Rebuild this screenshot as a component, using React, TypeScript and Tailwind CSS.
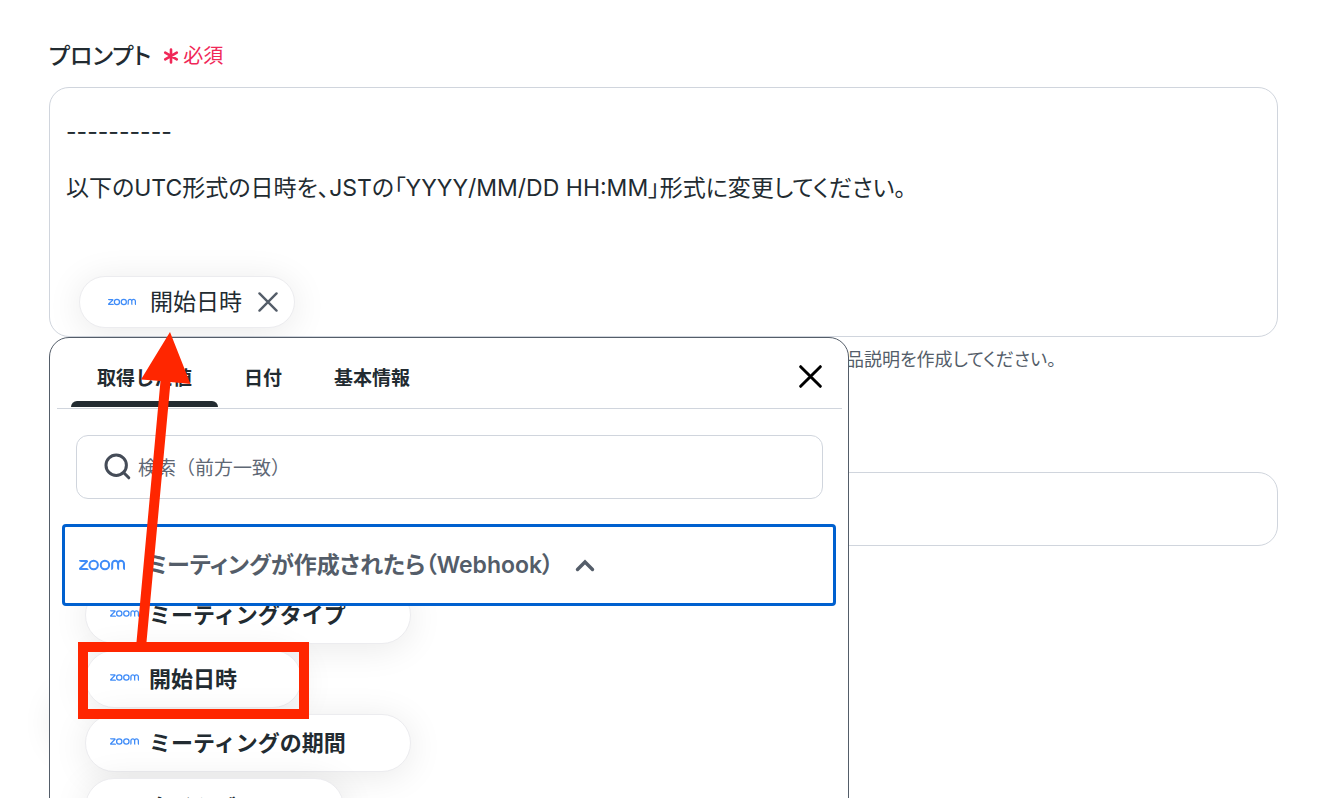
import React from 'react';
import { SiZoom } from 'react-icons/si';

const fields = ['ミーティングタイプ', '開始日時', 'ミーティングの期間', 'タイムゾーン'];

const tabs = [
  { label: '取得した値', active: true },
  { label: '日付', active: false },
  { label: '基本情報', active: false },
];

function Cross({ className }: { className: string }) {
  return (
    <svg viewBox="0 0 22 22" className={className} fill="none" stroke="currentColor" strokeLinecap="round" aria-hidden="true">
      <path d="M1.6 1.6 20.4 20.4M20.4 1.6 1.6 20.4" />
    </svg>
  );
}

function PromptField() {
  return (
    <section>
      <div className="flex h-8 items-center">
        <label htmlFor="prompt" className="text-[23px] font-medium">プロンプト</label>
        <span className="ml-3 flex items-center gap-1 text-[20px] text-[#f02858]">
          <svg viewBox="0 0 16 16" className="size-4" stroke="currentColor" strokeWidth="2.6" strokeLinecap="round" aria-hidden="true">
            <path d="M8 1.6v12.8M2.2 4.6l11.6 6.8M13.8 4.6 2.2 11.4" />
          </svg>
          必須
        </span>
      </div>
      <div className="mt-[15px] h-[250px] rounded-[20px] border border-[#d0d5dd] pt-[30px]">
        <textarea
          id="prompt"
          rows={4}
          className="block w-full resize-none overflow-hidden bg-transparent px-4 text-[23px] leading-7 outline-none"
          defaultValue={'----------\n\n以下のUTC形式の日時を、JSTの「YYYY/MM/DD HH:MM」形式に変更してください。'}
        />
        <div className="ml-[29px] mt-[46px] inline-flex h-[52px] items-center rounded-full border border-[#ececef] bg-white pl-7 pr-4 shadow-[0_4px_36px_rgba(0,0,0,0.09)]">
          <SiZoom className="size-7 text-[#3f8cf8]" aria-label="zoom" />
          <span className="ml-3.5 text-[23px]">開始日時</span>
          <button type="button" aria-label="削除" className="ml-4 text-[#545d69]">
            <Cross className="size-5 stroke-[2.6]" />
          </button>
        </div>
      </div>
    </section>
  );
}

function ValuePicker() {
  return (
    <div className="absolute left-[49px] top-[337px] h-[600px] w-[800px] overflow-hidden rounded-[20px] border border-[#545d69] bg-white">
      <div className="ml-[7px] mr-1.5 flex h-[71px] items-stretch border-b border-[#d0d5dd] pl-3.5 pr-5">
        <div role="tablist" className="flex">
          {tabs.map((tab) => (
            <button
              key={tab.label}
              type="button"
              role="tab"
              aria-selected={tab.active}
              className="relative px-[26px] pt-3 text-[19px] font-semibold [font-feature-settings:normal]"
            >
              {tab.label}
              {tab.active && <span className="absolute inset-x-0 bottom-px h-1.5 rounded-t-md bg-[#222b31]" />}
            </button>
          ))}
        </div>
        <button type="button" aria-label="閉じる" className="ml-auto mt-1.5 text-black">
          <Cross className="size-[23px] stroke-[2.8]" />
        </button>
      </div>

      <label className="ml-[26px] mr-[25px] mt-[26px] flex h-16 items-center rounded-xl border border-[#d0d5dd] pl-[27px] pr-4">
        <svg viewBox="0 0 28 28" className="size-7 shrink-0" fill="none" stroke="#454c58" strokeWidth="3" strokeLinecap="round" aria-hidden="true">
          <circle cx="12.2" cy="12.2" r="10.2" />
          <path d="m19.8 19.8 5 5" />
        </svg>
        <input
          type="text"
          aria-label="検索"
          placeholder="検索（前方一致）"
          className="ml-1.5 min-w-0 flex-1 bg-transparent pt-1 text-[19px] outline-none [font-feature-settings:normal] placeholder:text-[#5f6875]"
        />
      </label>

      <button
        type="button"
        aria-expanded="true"
        className="mx-3 mt-[25px] flex h-[82px] w-[774px] items-center rounded border-[3px] border-[#0060cf] pl-3.5 text-left text-[#545d69]"
      >
        <SiZoom className="size-[46px] text-[#3f8cf8]" aria-label="zoom" />
        <span className="ml-[22px] text-[23px] font-semibold">ミーティングが作成されたら（Webhook）</span>
        <svg viewBox="0 0 20 14" className="ml-[21px] h-3.5 w-5" fill="none" stroke="currentColor" strokeWidth="3.4" strokeLinecap="round" aria-hidden="true">
          <path d="m2.5 11.5 7.5-7.5 7.5 7.5" />
        </svg>
      </button>

      <div className="overflow-hidden pb-16 pl-[35px]">
        <ul className="-mt-5 flex flex-col items-start gap-1.5">
          {fields.map((field) => (
            <li key={field}>
              <button
                type="button"
                className="flex h-[58px] items-center rounded-full border border-[#ececef] bg-white pl-6 pr-16 shadow-[0_4px_36px_rgba(0,0,0,0.09)]"
              >
                <SiZoom className="mb-1 size-[29px] text-[#3f8cf8]" aria-label="zoom" />
                <span className="ml-2.5 text-[22px] font-semibold [font-feature-settings:normal]">{field}</span>
              </button>
            </li>
          ))}
        </ul>
      </div>
    </div>
  );
}

export default function App() {
  return (
    <main className="relative h-screen overflow-hidden bg-white pl-[49px] pr-[52px] pt-10 font-['Inter','Noto_Sans_CJK_JP',sans-serif] text-[#222b31] [font-feature-settings:'palt']">
      <PromptField />
      <p className="mt-[9px] whitespace-nowrap pl-[797px] text-[18px] leading-7 text-[#545d69]">品説明を作成してください。</p>
      <input
        type="text"
        aria-label="出力内容"
        className="mt-[98px] h-[74px] w-full rounded-[20px] border border-[#d0d5dd] px-4 text-[23px] outline-none"
      />

      <div className="absolute left-14 top-[695px] size-14 rounded-full shadow-[0_0_36px_rgba(0,20,10,0.12)]" />
      <ValuePicker />

      <svg viewBox="0 0 60 320" className="pointer-events-none absolute left-[135px] top-[328px] h-80 w-[60px]" aria-hidden="true">
        <path d="M35 4 6 51.5l19.5 1.5L1.5 314h10L35.5 54l20 2z" fill="#ff2600" />
      </svg>
      <div className="pointer-events-none absolute left-[78px] top-[642px] h-[77px] w-[231px] border-[10px] border-[#ff2600]" />
    </main>
  );
}
